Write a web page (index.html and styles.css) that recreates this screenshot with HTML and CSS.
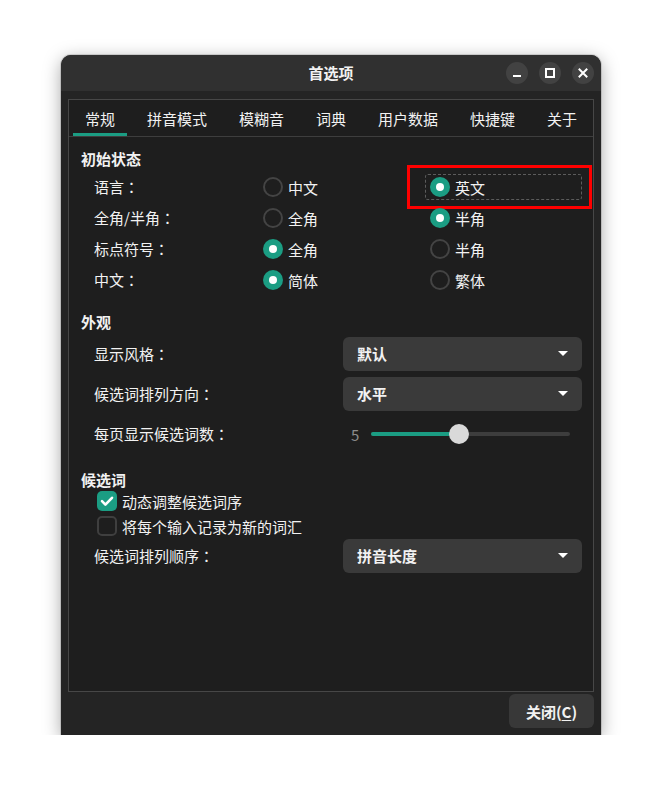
FILE: index.html
```html
<!DOCTYPE html>
<html lang="zh-CN">
<head>
<meta charset="utf-8">
<title>首选项</title>
<link rel="stylesheet" href="styles.css">
</head>
<body>
<div class="window">
  <header class="titlebar">
    <div></div>
    <div class="title">首选项</div>
    <div class="wm-buttons">
      <span class="wm-btn"><svg width="22" height="22" viewBox="0 0 22 22"><rect x="7" y="13" width="8" height="2" fill="#fff"/></svg></span>
      <span class="wm-btn"><svg width="22" height="22" viewBox="0 0 22 22"><rect x="7" y="7" width="8" height="8" fill="none" stroke="#fff" stroke-width="2"/></svg></span>
      <span class="wm-btn"><svg width="22" height="22" viewBox="0 0 22 22"><path d="M7.5 7.5 L14.5 14.5 M14.5 7.5 L7.5 14.5" stroke="#fff" stroke-width="2" stroke-linecap="square"/></svg></span>
    </div>
  </header>
  <div class="body">
    <div class="notebook">
      <nav class="tabs">
        <span class="tab active">常规</span>
        <span class="tab">拼音模式</span>
        <span class="tab">模糊音</span>
        <span class="tab">词典</span>
        <span class="tab">用户数据</span>
        <span class="tab">快捷键</span>
        <span class="tab">关于</span>
      </nav>
      <div class="page">
        <div class="section-title">初始状态</div>
        <div class="radio-grid">
          <div class="label">语言<span class="colon">：</span></div>
          <div class="radio-item"><span class="radio"></span>中文</div>
          <div class="radio-item focused"><span class="radio checked"></span>英文<span class="highlight"></span></div>

          <div class="label">全角/半角<span class="colon">：</span></div>
          <div class="radio-item"><span class="radio"></span>全角</div>
          <div class="radio-item"><span class="radio checked"></span>半角</div>

          <div class="label">标点符号<span class="colon">：</span></div>
          <div class="radio-item"><span class="radio checked"></span>全角</div>
          <div class="radio-item"><span class="radio"></span>半角</div>

          <div class="label">中文<span class="colon">：</span></div>
          <div class="radio-item"><span class="radio checked"></span>简体</div>
          <div class="radio-item"><span class="radio"></span>繁体</div>
        </div>

        <div class="section-title gap">外观</div>
        <div class="form-grid">
          <div class="label">显示风格<span class="colon">：</span></div>
          <div class="dropdown"><span>默认</span><span class="arrow"></span></div>
          <div class="label">候选词排列方向<span class="colon">：</span></div>
          <div class="dropdown"><span>水平</span><span class="arrow"></span></div>
          <div class="label">每页显示候选词数<span class="colon">：</span></div>
          <div class="slider">
            <span class="slider-value">5</span>
            <div class="track"><div class="fill" style="width:44.4%"></div><span class="knob" style="left:44.4%"></span></div>
          </div>
        </div>

        <div class="section-title gap">候选词</div>
        <div class="checks">
          <div class="check-item"><span class="checkbox checked"><svg width="20" height="20" viewBox="0 0 20 20"><path d="M5 10.2 L8.4 13.6 L15 6.8" fill="none" stroke="#fff" stroke-width="2.6" stroke-linecap="round" stroke-linejoin="round"/></svg></span>动态调整候选词序</div>
          <div class="check-item"><span class="checkbox"></span>将每个输入记录为新的词汇</div>
        </div>
        <div class="form-grid tight">
          <div class="label">候选词排列顺序<span class="colon">：</span></div>
          <div class="dropdown"><span>拼音长度</span><span class="arrow"></span></div>
        </div>
      </div>
    </div>
    <div class="footer">
      <button class="btn">关闭(<u>C</u>)</button>
    </div>
  </div>
</div>
</body>
</html>
```
FILE: styles.css
```css
* { box-sizing: border-box; }
html, body { margin: 0; padding: 0; background: #ffffff; }
body {
  font-family: "Noto Sans CJK SC", "Noto Sans", sans-serif;
  font-size: 15px;
  color: #f2f2f2;
}
.window {
  width: 540px;
  height: 680px;
  margin: 55px 0 0 61px;
  background: #242424;
  border-radius: 10px 10px 0 0;
  box-shadow: 0 4px 18px rgba(0,0,0,0.35), 0 0 0 1px rgba(0,0,0,0.12);
  display: flex;
  flex-direction: column;
}
.titlebar {
  height: 36px;
  background: #303030;
  border-radius: 10px 10px 0 0;
  display: grid;
  grid-template-columns: 1fr auto 1fr;
  align-items: center;
}
.title { font-weight: bold; line-height: 20px; }
.wm-buttons {
  justify-self: end;
  display: flex;
  gap: 11px;
  padding-right: 7px;
}
.wm-btn {
  width: 22px; height: 22px;
  border-radius: 50%;
  background: #424242;
  display: block;
}
.wm-btn svg { display: block; }
.body {
  flex: 1;
  padding: 8px 7px 0 7px;
  display: flex;
  flex-direction: column;
}
.notebook {
  height: 593px;
  border: 1px solid #474747;
  background: #1e1e1e;
  display: flex;
  flex-direction: column;
}
.tabs {
  display: flex;
  height: 37px;
  border-bottom: 1px solid #3e3e3e;
}
.tab {
  margin: 0 4px;
  padding: 3px 12px 0;
  height: 36px;
  display: flex;
  align-items: center;
  border-bottom: 3px solid transparent;
  white-space: nowrap;
}
.tab.active { border-bottom-color: #1b9d83; }
.page {
  padding: 12px 11px 0 12px;
}
.section-title {
  font-weight: bold;
  line-height: 20px;
}
.section-title.gap { margin-top: 19px; }
.label { display: flex; align-items: center; white-space: nowrap; padding-bottom: 1px; }
.colon { font-family: "Noto Sans CJK TC", "Noto Sans CJK SC", sans-serif; }
.radio-grid {
  margin: 5px 0 0 13px;
  display: grid;
  grid-template-columns: 164px 167px 1fr;
  grid-auto-rows: 26px;
  row-gap: 5px;
}
.radio-item {
  display: flex;
  align-items: center;
  gap: 5px;
  padding-left: 5px;
  position: relative;
}
.radio-item.focused {
  border: 1px dashed #5c5c5c;
  border-radius: 3px;
  padding-left: 4px;
}
.highlight {
  position: absolute;
  left: -19px; top: -10px; right: -11px; bottom: -10px;
  border: 3px solid #ff0000;
  pointer-events: none;
}
.radio {
  width: 20px; height: 20px;
  border-radius: 50%;
  border: 2px solid #444444;
  flex: none;
  position: relative;
}
.radio.checked {
  border: none;
  background: #1b9d83;
}
.radio.checked::after {
  content: "";
  position: absolute;
  left: 6px; top: 6px;
  width: 8px; height: 8px;
  border-radius: 50%;
  background: #ffffff;
}
.form-grid {
  margin: 5px 0 0 13px;
  display: grid;
  grid-template-columns: 249px 1fr;
  grid-auto-rows: 34px;
  row-gap: 6px;
}
.form-grid.tight { margin-top: 2px; }
.dropdown {
  background: #3a3a3a;
  border-radius: 6px;
  display: flex;
  align-items: center;
  justify-content: space-between;
  padding: 0 14px 1px;
  font-weight: bold;
}
.arrow {
  width: 0; height: 0;
  border-left: 5px solid transparent;
  border-right: 5px solid transparent;
  border-top: 5px solid #ffffff;
}
.slider {
  display: flex;
  align-items: center;
  padding: 0 12px 0 8px;
}
.slider-value {
  color: #8c8c8c;
  width: 20px;
}
.track {
  flex: 1;
  height: 4px;
  border-radius: 2px;
  background: #3d3d3d;
  position: relative;
}
.fill {
  height: 4px;
  border-radius: 2px;
  background: #1b9d83;
}
.knob {
  position: absolute;
  top: -8px;
  width: 20px; height: 20px;
  margin-left: -10px;
  border-radius: 50%;
  background: #d9d9d9;
}
.checks {
  margin-left: 16px;
  display: flex;
  flex-direction: column;
  gap: 3px;
}
.check-item {
  height: 22px;
  display: flex;
  align-items: center;
  gap: 5px;
}
.checkbox {
  width: 20px; height: 20px;
  border-radius: 5px;
  border: 2px solid #3f3f3f;
  flex: none;
}
.checkbox.checked {
  border: none;
  background: #1b9d83;
}
.checkbox svg { display: block; }
.footer {
  display: flex;
  justify-content: flex-end;
  padding-top: 2px;
}
.btn {
  width: 85px;
  height: 34px;
  border: none;
  border-radius: 6px;
  background: #383838;
  color: #f2f2f2;
  font-family: inherit;
  font-size: 15px;
  font-weight: bold;
  padding: 0;
}
.btn u { text-underline-offset: 2px; }
```
